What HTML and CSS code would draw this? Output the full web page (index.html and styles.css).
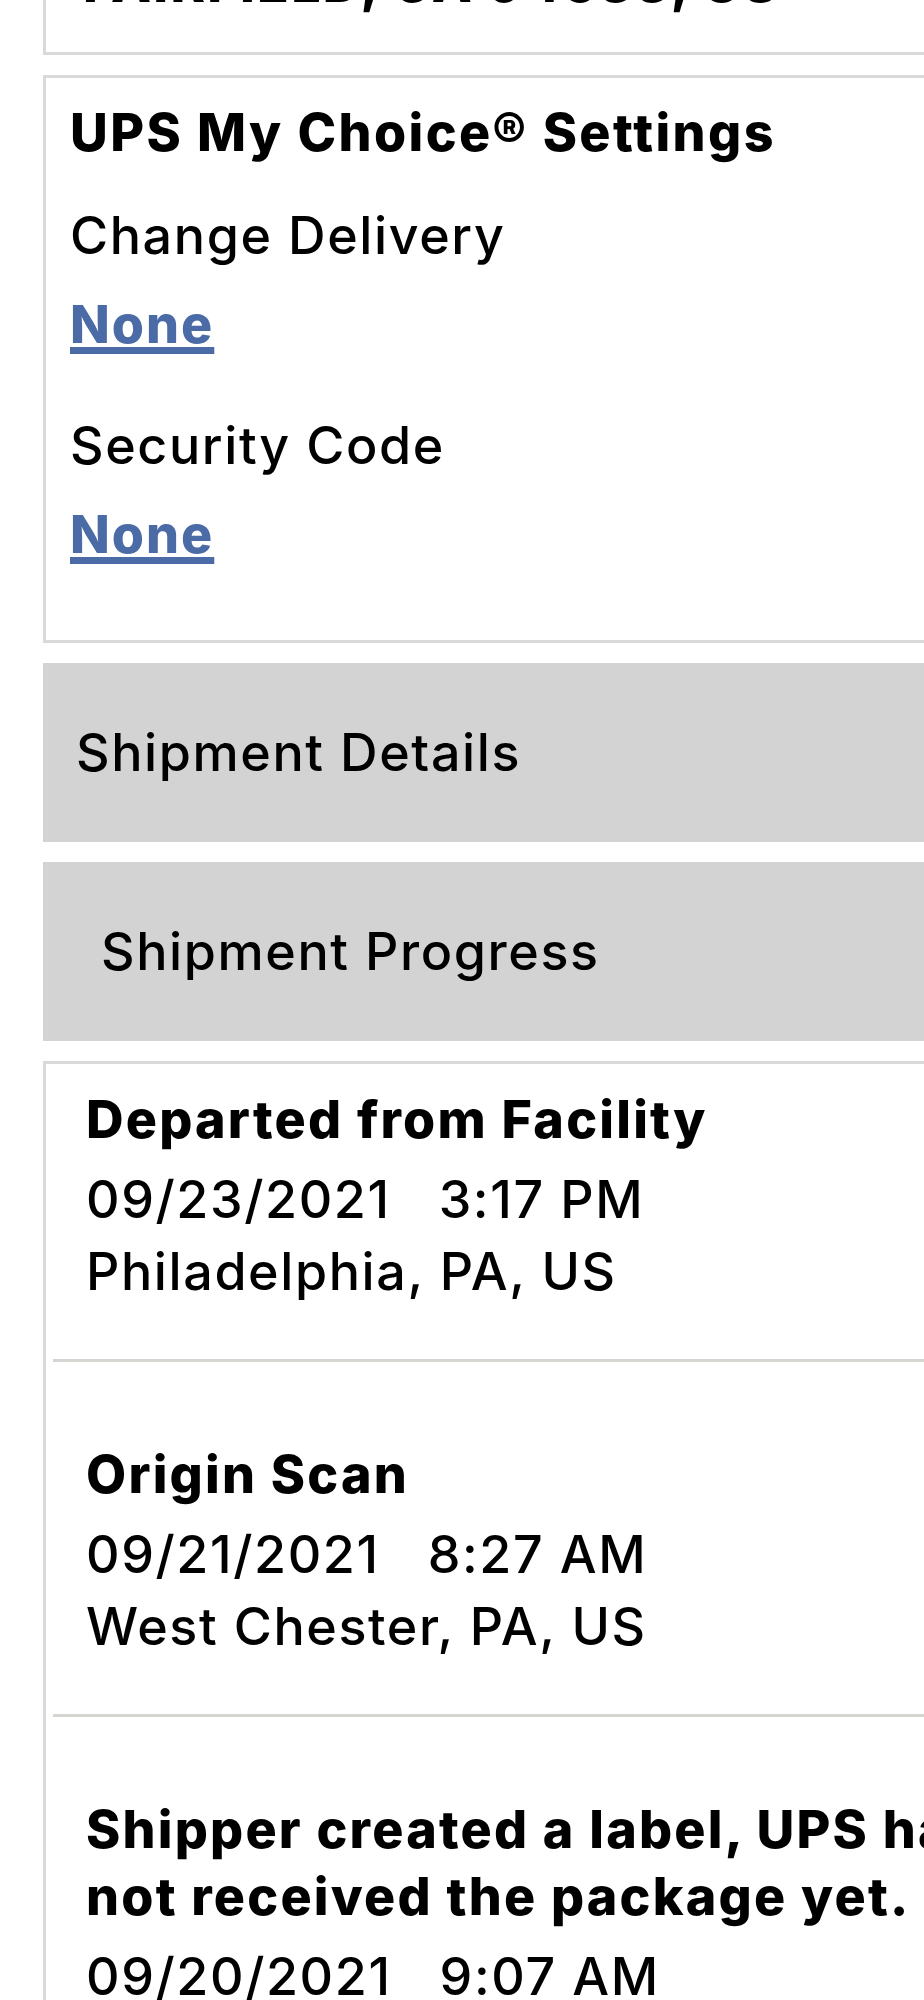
FILE: index.html
```html
<!DOCTYPE html>
<html lang="en">
<head>
<meta charset="utf-8">
<title>UPS Tracking</title>
<link rel="stylesheet" href="styles.css">
</head>
<body>
<div class="page">
  <section class="card card-address">
    <p class="addr">FAIRFIELD, CA 94533, US</p>
  </section>

  <section class="card card-settings">
    <h2 class="settings-title">UPS My Choice® Settings</h2>
    <div class="settings-list">
      <div class="setting">
        <div class="setting-label">Change Delivery</div>
        <a class="setting-link" href="#">None</a>
      </div>
      <div class="setting">
        <div class="setting-label">Security Code</div>
        <a class="setting-link" href="#">None</a>
      </div>
    </div>
  </section>

  <div class="bar bar-details">Shipment Details</div>
  <div class="bar bar-progress">Shipment Progress</div>

  <section class="card card-progress">
    <div class="event">
      <div class="event-title">Departed from Facility</div>
      <div class="event-line"><span class="date">09/23/2021</span><span class="time">3:17 PM</span></div>
      <div class="event-line">Philadelphia, PA, US</div>
    </div>
    <div class="event">
      <div class="event-title">Origin Scan</div>
      <div class="event-line"><span class="date">09/21/2021</span><span class="time">8:27 AM</span></div>
      <div class="event-line">West Chester, PA, US</div>
    </div>
    <div class="event">
      <div class="event-title">Shipper created a label, UPS has not received the package yet.</div>
      <div class="event-line"><span class="date">09/20/2021</span><span class="time">9:07 AM</span></div>
      <div class="event-line">United States</div>
    </div>
  </section>
</div>
</body>
</html>
```

FILE: styles.css
```css
html, body {
  margin: 0;
  padding: 0;
  background: #ffffff;
  overflow: hidden;
}

body {
  font-family: Inter, "Liberation Sans", Arial, sans-serif;
  font-size: 52px;
  font-weight: 500;
  letter-spacing: 1.6px;
  color: #000000;
}

.page {
  width: 1080px;
  margin-left: 43px;
  display: flex;
  flex-direction: column;
  gap: 20px;
}

.card {
  border: 3px solid #d9d9d9;
  background: #ffffff;
}

.card-address {
  margin-top: -75px;
  padding: 20px 37px 32px;
}

.addr {
  margin: 0;
  line-height: 72px;
  font-weight: 800;
  letter-spacing: 2.3px;
}

.card-settings {
  padding: 25px 24px 75px;
  display: flex;
  flex-direction: column;
}

.settings-title {
  margin: 0 0 43px;
  font-size: 52px;
  font-weight: 800;
  letter-spacing: 2.4px;
  line-height: 60px;
}

.settings-list {
  display: flex;
  flex-direction: column;
  gap: 61px;
}

.setting {
  display: flex;
  flex-direction: column;
  align-items: flex-start;
  gap: 29px;
  line-height: 60px;
}

.setting-link {
  color: #4a6ba6;
  font-weight: 800;
  letter-spacing: 2px;
  text-decoration: underline;
  text-decoration-thickness: 7px;
  text-underline-offset: 4px;
}

.bar {
  background: #d3d3d3;
  line-height: 60px;
  padding: 60px 0 59px;
}

.bar-details {
  padding-left: 33px;
}

.bar-progress {
  padding-left: 58px;
}

.card-progress {
  padding: 22px 0 0;
}

.event {
  margin-left: 7px;
  padding: 0 0 51px 33px;
  width: 957px;
}

.event + .event {
  border-top: 3px solid #d7d5d1;
  padding-top: 79px;
}

.event-title {
  font-weight: 800;
  letter-spacing: 2.2px;
  line-height: 67px;
  margin-bottom: 11px;
}

.event-line {
  line-height: 72px;
}

.time {
  margin-left: 48px;
}
```
